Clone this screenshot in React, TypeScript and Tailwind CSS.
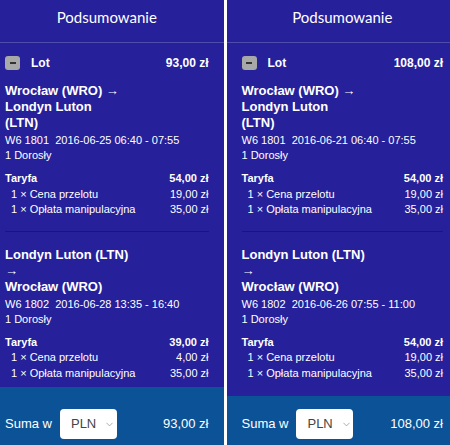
import { ChevronDown } from 'lucide-react'

type Leg = {
  route: string[]
  flight: string
  when: string
  fare: string
  base: string
  fee: string
}

type Summary = {
  total: string
  legs: Leg[]
  pad: string
  footer: string
}

const summaries: Summary[] = [
  {
    total: '93,00 zł',
    pad: 'pl-[5px] pr-[15px]',
    footer: 'h-[58px] pt-[22px]',
    legs: [
      {
        route: ['Wrocław (WRO) →', 'Londyn Luton', '(LTN)'],
        flight: '1801',
        when: '2016-06-25 06:40 - 07:55',
        fare: '54,00 zł',
        base: '19,00 zł',
        fee: '35,00 zł',
      },
      {
        route: ['Londyn Luton (LTN)', '→', 'Wrocław (WRO)'],
        flight: '1802',
        when: '2016-06-28 13:35 - 16:40',
        fare: '39,00 zł',
        base: '4,00 zł',
        fee: '35,00 zł',
      },
    ],
  },
  {
    total: '108,00 zł',
    pad: 'pl-[15px] pr-[7px]',
    footer: 'h-[49px] pt-[13px]',
    legs: [
      {
        route: ['Wrocław (WRO) →', 'Londyn Luton', '(LTN)'],
        flight: '1801',
        when: '2016-06-21 06:40 - 07:55',
        fare: '54,00 zł',
        base: '19,00 zł',
        fee: '35,00 zł',
      },
      {
        route: ['Londyn Luton (LTN)', '→', 'Wrocław (WRO)'],
        flight: '1802',
        when: '2016-06-26 07:55 - 11:00',
        fare: '54,00 zł',
        base: '19,00 zł',
        fee: '35,00 zł',
      },
    ],
  },
]

function LegDetails({ leg }: { leg: Leg }) {
  return (
    <div>
      <div className="w-[135px] text-[13px] font-bold leading-[16px]">
        {leg.route.map((line) => (
          <div key={line}>{line}</div>
        ))}
      </div>
      <div className="mt-[2px] text-[11px] leading-[15px]">
        <div>
          W6 {leg.flight}&nbsp; {leg.when}
        </div>
        <div>1 Dorosły</div>
      </div>
      <div className="mt-[8px] text-[11px] leading-[15.5px]">
        <div className="flex justify-between font-bold">
          <span>Taryfa</span>
          <span>{leg.fare}</span>
        </div>
        <div className="flex justify-between pl-[6px]">
          <span>1 × Cena przelotu</span>
          <span>{leg.base}</span>
        </div>
        <div className="flex justify-between pl-[6px]">
          <span>1 × Opłata manipulacyjna</span>
          <span>{leg.fee}</span>
        </div>
      </div>
    </div>
  )
}

function SummaryPanel({ data }: { data: Summary }) {
  return (
    <div className="flex h-[445px] flex-1 flex-col bg-[#26209a] text-white">
      <div
        className={`h-[43px] border-b border-[#4f4caa] pt-[8px] text-center text-[15px] leading-[18px] ${data.pad}`}
        style={{ fontFamily: 'Lato, "Open Sans", sans-serif' }}
      >
        Podsumowanie
      </div>
      <div className={`${data.pad} pt-[12px]`}>
        <div className="flex h-4 items-center justify-between text-[12px] font-bold">
          <div className="flex items-center">
            <span className="flex h-[14px] w-[15px] items-center justify-center rounded-[3px] bg-[#a8a8a8]">
              <span className="h-[2px] w-[6px] bg-[#333]" />
            </span>
            <span className="ml-[11px]">Lot</span>
          </div>
          <span>{data.total}</span>
        </div>
        <div className="mt-[12px]">
          <LegDetails leg={data.legs[0]} />
        </div>
        <div className="mt-[13px] h-px bg-[#1d1a5a]" />
        <div className="mt-[15px]">
          <LegDetails leg={data.legs[1]} />
        </div>
      </div>
      <div className={`mt-auto flex items-start justify-between bg-[#0c5296] ${data.footer} ${data.pad}`}>
        <div className="flex items-center">
          <span className="text-[13px]">Suma w</span>
          <div className="ml-[8px] flex h-[30px] w-[57px] items-center rounded-[4px] bg-white pl-[11px] text-[13px] text-[#444]">
            <span>PLN</span>
            <ChevronDown size={11} strokeWidth={1.5} className="ml-[8px] text-[#888]" />
          </div>
        </div>
        <span className="text-[13px] leading-[30px]">{data.total}</span>
      </div>
    </div>
  )
}

export default function App() {
  return (
    <div
      className="flex h-[445px] w-[450px] gap-[3px] overflow-hidden bg-white"
      style={{ fontFamily: '"Liberation Sans", Arial, sans-serif' }}
    >
      {summaries.map((s) => (
        <SummaryPanel key={s.total} data={s} />
      ))}
    </div>
  )
}
